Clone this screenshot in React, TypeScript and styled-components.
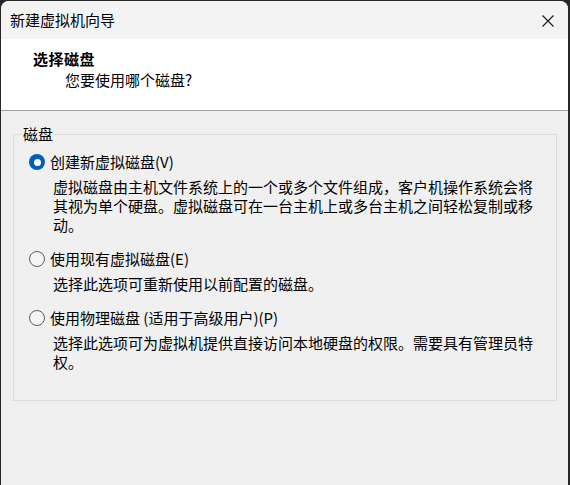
import React from "react";
import styled, { createGlobalStyle } from "styled-components";

const Global = createGlobalStyle`
  html, body {
    margin: 0;
    padding: 0;
    background: #262626;
  }
  body {
    font-family: "Noto Sans CJK SC", "Noto Sans", sans-serif;
    color: #000;
  }
`;

const Window = styled.div`
  margin: 1px 0 0 1px;
  width: 567px;
  height: 484px;
  background: #f0f0f0;
  border-radius: 8px 8px 0 0;
  overflow: hidden;
  display: flex;
  flex-direction: column;
`;

const TitleBar = styled.div`
  height: 38px;
  background: #f3f3f3;
  display: flex;
  align-items: center;
  justify-content: space-between;
  padding: 0 14px 0 9px;
  flex-shrink: 0;
`;

const TitleText = styled.div`
  font-size: 15px;
  line-height: 20px;
`;

const CloseButton = styled.div`
  width: 12px;
  height: 12px;
  display: flex;
  margin-top: 1px;
`;

const Header = styled.div`
  height: 72px;
  background: #ffffff;
  border-bottom: 1px solid #a0a0a0;
  display: flex;
  flex-direction: column;
  padding: 10px 0 0 32px;
  box-sizing: border-box;
  flex-shrink: 0;
`;

const HeaderTitle = styled.div`
  font-size: 15px;
  font-weight: 700;
  line-height: 20px;
  letter-spacing: 0.5px;
`;

const HeaderSub = styled.div`
  font-size: 15px;
  line-height: 20px;
  padding-left: 32px;
  margin-top: 1px;
`;

const Body = styled.div`
  padding: 13px 11px 0 12px;
`;

const Group = styled.fieldset`
  margin: 0;
  height: 277px;
  box-sizing: border-box;
  border: 1px solid #dcdcdc;
  padding: 8px 0 0 0;
  display: flex;
  flex-direction: column;
  gap: 15px;
`;

const Legend = styled.legend`
  font-size: 15px;
  line-height: 20px;
  padding: 0 1px;
  margin-left: 8px;
`;

const Option = styled.div`
  display: flex;
  flex-direction: column;
  padding-left: 15px;
`;

const OptionRow = styled.div`
  display: flex;
  align-items: center;
  height: 20px;
  gap: 5px;
`;

const Radio = styled.span<{ $checked?: boolean }>`
  width: 16px;
  height: 16px;
  border-radius: 50%;
  box-sizing: border-box;
  flex-shrink: 0;
  display: flex;
  align-items: center;
  justify-content: center;
  background: ${(p) => (p.$checked ? "#005fb8" : "#f5f5f5")};
  border: ${(p) => (p.$checked ? "none" : "1px solid #5c5c5c")};
  &::after {
    content: "";
    display: ${(p) => (p.$checked ? "block" : "none")};
    width: 7px;
    height: 7px;
    border-radius: 50%;
    background: #ffffff;
  }
`;

const OptionLabel = styled.span`
  font-size: 15px;
  line-height: 20px;
  white-space: nowrap;
`;

const Desc = styled.div`
  font-size: 15px;
  line-height: 19px;
  margin: 5px 0 0 24px;
  width: 485px;
  word-break: break-all;
`;

const options = [
  {
    label: "创建新虚拟磁盘(V)",
    desc: "虚拟磁盘由主机文件系统上的一个或多个文件组成，客户机操作系统会将其视为单个硬盘。虚拟磁盘可在一台主机上或多台主机之间轻松复制或移动。",
    checked: true,
  },
  {
    label: "使用现有虚拟磁盘(E)",
    desc: "选择此选项可重新使用以前配置的磁盘。",
    checked: false,
  },
  {
    label: "使用物理磁盘 (适用于高级用户)(P)",
    desc: "选择此选项可为虚拟机提供直接访问本地硬盘的权限。需要具有管理员特权。",
    checked: false,
  },
];

export default function App() {
  return (
    <>
      <Global />
      <Window>
        <TitleBar>
          <TitleText>新建虚拟机向导</TitleText>
          <CloseButton>
            <svg width="12" height="12" viewBox="0 0 12 12">
              <path d="M0.5 0.5 L11.5 11.5 M11.5 0.5 L0.5 11.5" stroke="#1a1a1a" strokeWidth="1.1" fill="none" />
            </svg>
          </CloseButton>
        </TitleBar>
        <Header>
          <HeaderTitle>选择磁盘</HeaderTitle>
          <HeaderSub>您要使用哪个磁盘?</HeaderSub>
        </Header>
        <Body>
          <Group>
            <Legend>磁盘</Legend>
            {options.map((o) => (
              <Option key={o.label}>
                <OptionRow>
                  <Radio $checked={o.checked} />
                  <OptionLabel>{o.label}</OptionLabel>
                </OptionRow>
                <Desc>{o.desc}</Desc>
              </Option>
            ))}
          </Group>
        </Body>
      </Window>
    </>
  );
}
